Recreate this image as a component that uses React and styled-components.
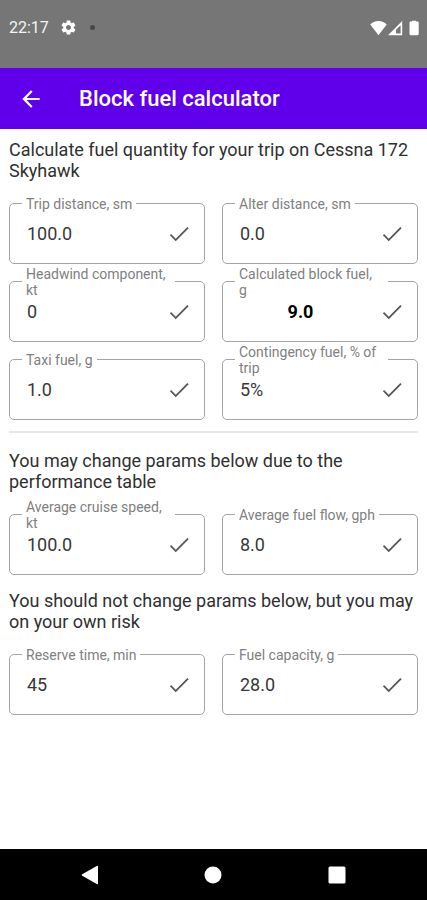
import React, { useState } from "react";
import styled, { createGlobalStyle } from "styled-components";

const GlobalStyle = createGlobalStyle`
  * { box-sizing: border-box; }
  body {
    margin: 0;
    background: #fff;
    font-family: Roboto, "Liberation Sans", sans-serif;
  }
`;

const Screen = styled.div`
  min-height: 100vh;
  display: flex;
  flex-direction: column;
  background: #fff;
`;

const StatusBar = styled.div`
  height: 68px;
  padding: 0 7px 13px 9px;
  display: flex;
  align-items: center;
  background: #767676;
  color: #fff;
`;

const Clock = styled.time`
  margin-right: 11px;
  font-size: 16px;
  line-height: 20px;
  color: #f4f4f4;
`;

const Dot = styled.span`
  width: 5px;
  height: 5px;
  margin-left: 13px;
  border-radius: 50%;
  background: #484848;
`;

const StatusIcons = styled.div`
  margin-left: auto;
  display: flex;
  align-items: center;
`;

const Glyph = styled.svg`
  display: block;
  flex: none;
  fill: currentColor;
`;

const AppBar = styled.header`
  height: 61px;
  padding: 0 18px;
  display: flex;
  align-items: center;
  gap: 35px;
  background: #6000ea;
  color: #fff;
`;

const IconButton = styled.button`
  flex: none;
  padding: 0;
  border: 0;
  background: none;
  color: ${(p) => p.$color || "#fff"};
  cursor: pointer;
`;

const Title = styled.h1`
  margin: 0;
  font-size: 22px;
  line-height: 28px;
  font-weight: 500;
`;

const Content = styled.main`
  flex: 1;
  padding: 10px 9px 24px;
`;

const Note = styled.p`
  margin: 0 0 22px;
  font-size: 18px;
  line-height: 21px;
  color: #303030;
`;

const Fields = styled.div`
  display: grid;
  grid-template-columns: 1fr 1fr;
  gap: 17px;
`;

const FieldBox = styled.div`
  position: relative;
  height: 61px;
  padding: 0 12px 0 17px;
  display: flex;
  align-items: center;
  border: 1px solid #a4a4a4;
  border-radius: 5px;
`;

const FieldLabel = styled.label`
  position: absolute;
  top: 0;
  left: 12px;
  max-width: calc(100% - 41px);
  padding: 0 ${(p) => (p.$long ? 9 : 4)}px 0 4px;
  transform: translateY(-50%);
  background: #fff;
  font-size: 14px;
  line-height: 16px;
  color: #808080;
`;

const FieldInput = styled.input`
  flex: 1;
  min-width: 0;
  width: 0;
  padding: 0 ${(p) => (p.$result ? 18 : 0)}px 0 0;
  border: 0;
  outline: 0;
  background: transparent;
  font-family: inherit;
  font-size: 18px;
  line-height: 24px;
  font-weight: ${(p) => (p.$result ? 700 : 400)};
  text-align: ${(p) => (p.$result ? "center" : "left")};
  color: ${(p) => (p.$result ? "#000" : "#383838")};
`;

const Divider = styled.hr`
  height: 2px;
  margin: 11px 0 17px;
  border: 0;
  background: #e8e8e8;
`;

const Section = styled.section`
  & + & { margin-top: 15px; }
`;

const NavBar = styled.nav`
  height: 51px;
  padding: 0 28px;
  display: grid;
  grid-template-columns: repeat(3, 1fr);
  place-items: center;
  background: #000;
`;

function Field({ id, label, value, result, long }) {
  const [text, setText] = useState(value);
  return (
    <FieldBox>
      <FieldInput
        id={id}
        value={text}
        readOnly={result}
        $result={result}
        onChange={(e) => setText(e.target.value)}
      />
      <FieldLabel htmlFor={id} $long={long}>{label}</FieldLabel>
      <IconButton type="button" $color="#555" aria-label={`Confirm ${label}`}>
        <Glyph width="26" height="26" viewBox="0 0 24 24">
          <path d="M9 16.400 4.700 12.100l-1.100 1.100L9 18.700 20.900 6.800l-1.200-1.200z" />
        </Glyph>
      </IconButton>
    </FieldBox>
  );
}

export default function App() {
  return (
    <Screen>
      <GlobalStyle />
      <StatusBar>
        <Clock>22:17</Clock>
        <Glyph width="17" height="17" viewBox="0 0 24 24">
          <path d="M19.43 12.98c.04-.32.07-.64.07-.98s-.03-.66-.07-.98l2.11-1.65c.19-.15.24-.42.12-.64l-2-3.46c-.12-.22-.39-.3-.61-.22l-2.49 1c-.52-.4-1.08-.73-1.69-.98l-.38-2.65C14.46 2.18 14.25 2 14 2h-4c-.25 0-.46.18-.49.42l-.38 2.65c-.61.25-1.17.59-1.69.98l-2.49-1c-.23-.09-.49 0-.61.22l-2 3.46c-.13.22-.07.49.12.64l2.11 1.65c-.04.32-.07.65-.07.98s.03.66.07.98l-2.11 1.65c-.19.15-.24.42-.12.64l2 3.46c.12.22.39.3.61.22l2.49-1c.52.4 1.08.73 1.69.98l.38 2.65c.03.24.24.42.49.42h4c.25 0 .46-.18.49-.42l.38-2.65c.61-.25 1.17-.59 1.69-.98l2.49 1c.23.09.49 0 .61-.22l2-3.46c.12-.22.07-.49-.12-.64l-2.11-1.65zM12 15.5c-1.93 0-3.5-1.57-3.5-3.5s1.57-3.5 3.5-3.5 3.5 1.57 3.5 3.5-1.57 3.5-3.5 3.5z" />
        </Glyph>
        <Dot />
        <StatusIcons>
          <Glyph width="17" height="16" viewBox="0 0 17 16">
            <path d="M8.500 15.200 0.300 4.500C2.300 2.300 5.200 1 8.500 1s6.200 1.300 8.200 3.500z" />
          </Glyph>
          <Glyph width="16" height="16" viewBox="0 0 16 16">
            <path fillRule="evenodd" d="M1 15.200 15.200 1v14.200zM9 9.800v3.800h4.600V5.200z" />
          </Glyph>
          <Glyph width="17" height="16" viewBox="0 0 17 16">
            <path d="M9 1.600V.800h4v.800h1.500c.700 0 1.200.500 1.200 1.200v11.200c0 .700-.500 1.200-1.200 1.200H7.700c-.700 0-1.200-.500-1.200-1.200V2.800c0-.700.500-1.200 1.200-1.200z" />
          </Glyph>
        </StatusIcons>
      </StatusBar>

      <AppBar>
        <IconButton type="button" aria-label="Back">
          <Glyph width="26" height="26" viewBox="0 0 24 24">
            <path d="M20 11H7.830l5.590-5.590L12 4l-8 8 8 8 1.410-1.410L7.830 13H20v-2z" />
          </Glyph>
        </IconButton>
        <Title>Block fuel calculator</Title>
      </AppBar>

      <Content>
        <Section>
          <Note>Calculate fuel quantity for your trip on Cessna 172 Skyhawk</Note>
          <Fields>
            <Field id="trip" label="Trip distance, sm" value="100.0" />
            <Field id="alter" label="Alter distance, sm" value="0.0" />
            <Field id="wind" label="Headwind component, kt" value="0" long />
            <Field id="block" label="Calculated block fuel, g" value="9.0" result long />
            <Field id="taxi" label="Taxi fuel, g" value="1.0" />
            <Field id="contingency" label="Contingency fuel, % of trip" value="5%" long />
          </Fields>
        </Section>
        <Divider />
        <Section>
          <Note>You may change params below due to the performance table</Note>
          <Fields>
            <Field id="speed" label="Average cruise speed, kt" value="100.0" long />
            <Field id="flow" label="Average fuel flow, gph" value="8.0" />
          </Fields>
        </Section>
        <Section>
          <Note>You should not change params below, but you may on your own risk</Note>
          <Fields>
            <Field id="reserve" label="Reserve time, min" value="45" />
            <Field id="capacity" label="Fuel capacity, g" value="28.0" />
          </Fields>
        </Section>
      </Content>

      <NavBar>
        <IconButton type="button" aria-label="Back">
          <Glyph width="18" height="20" viewBox="0 0 18 20">
            <path d="M1.200 9.300 15.800.900q1.200-.600 1.200.700v16.800q0 1.300-1.200.700L1.200 10.700q-1.200-.700 0-1.400z" />
          </Glyph>
        </IconButton>
        <IconButton type="button" aria-label="Home">
          <Glyph width="18" height="18" viewBox="0 0 18 18">
            <circle cx="9" cy="9" r="8.500" />
          </Glyph>
        </IconButton>
        <IconButton type="button" aria-label="Recent apps">
          <Glyph width="18" height="18" viewBox="0 0 18 18">
            <rect x=".5" y=".5" width="17" height="17" rx="1.500" />
          </Glyph>
        </IconButton>
      </NavBar>
    </Screen>
  );
}
